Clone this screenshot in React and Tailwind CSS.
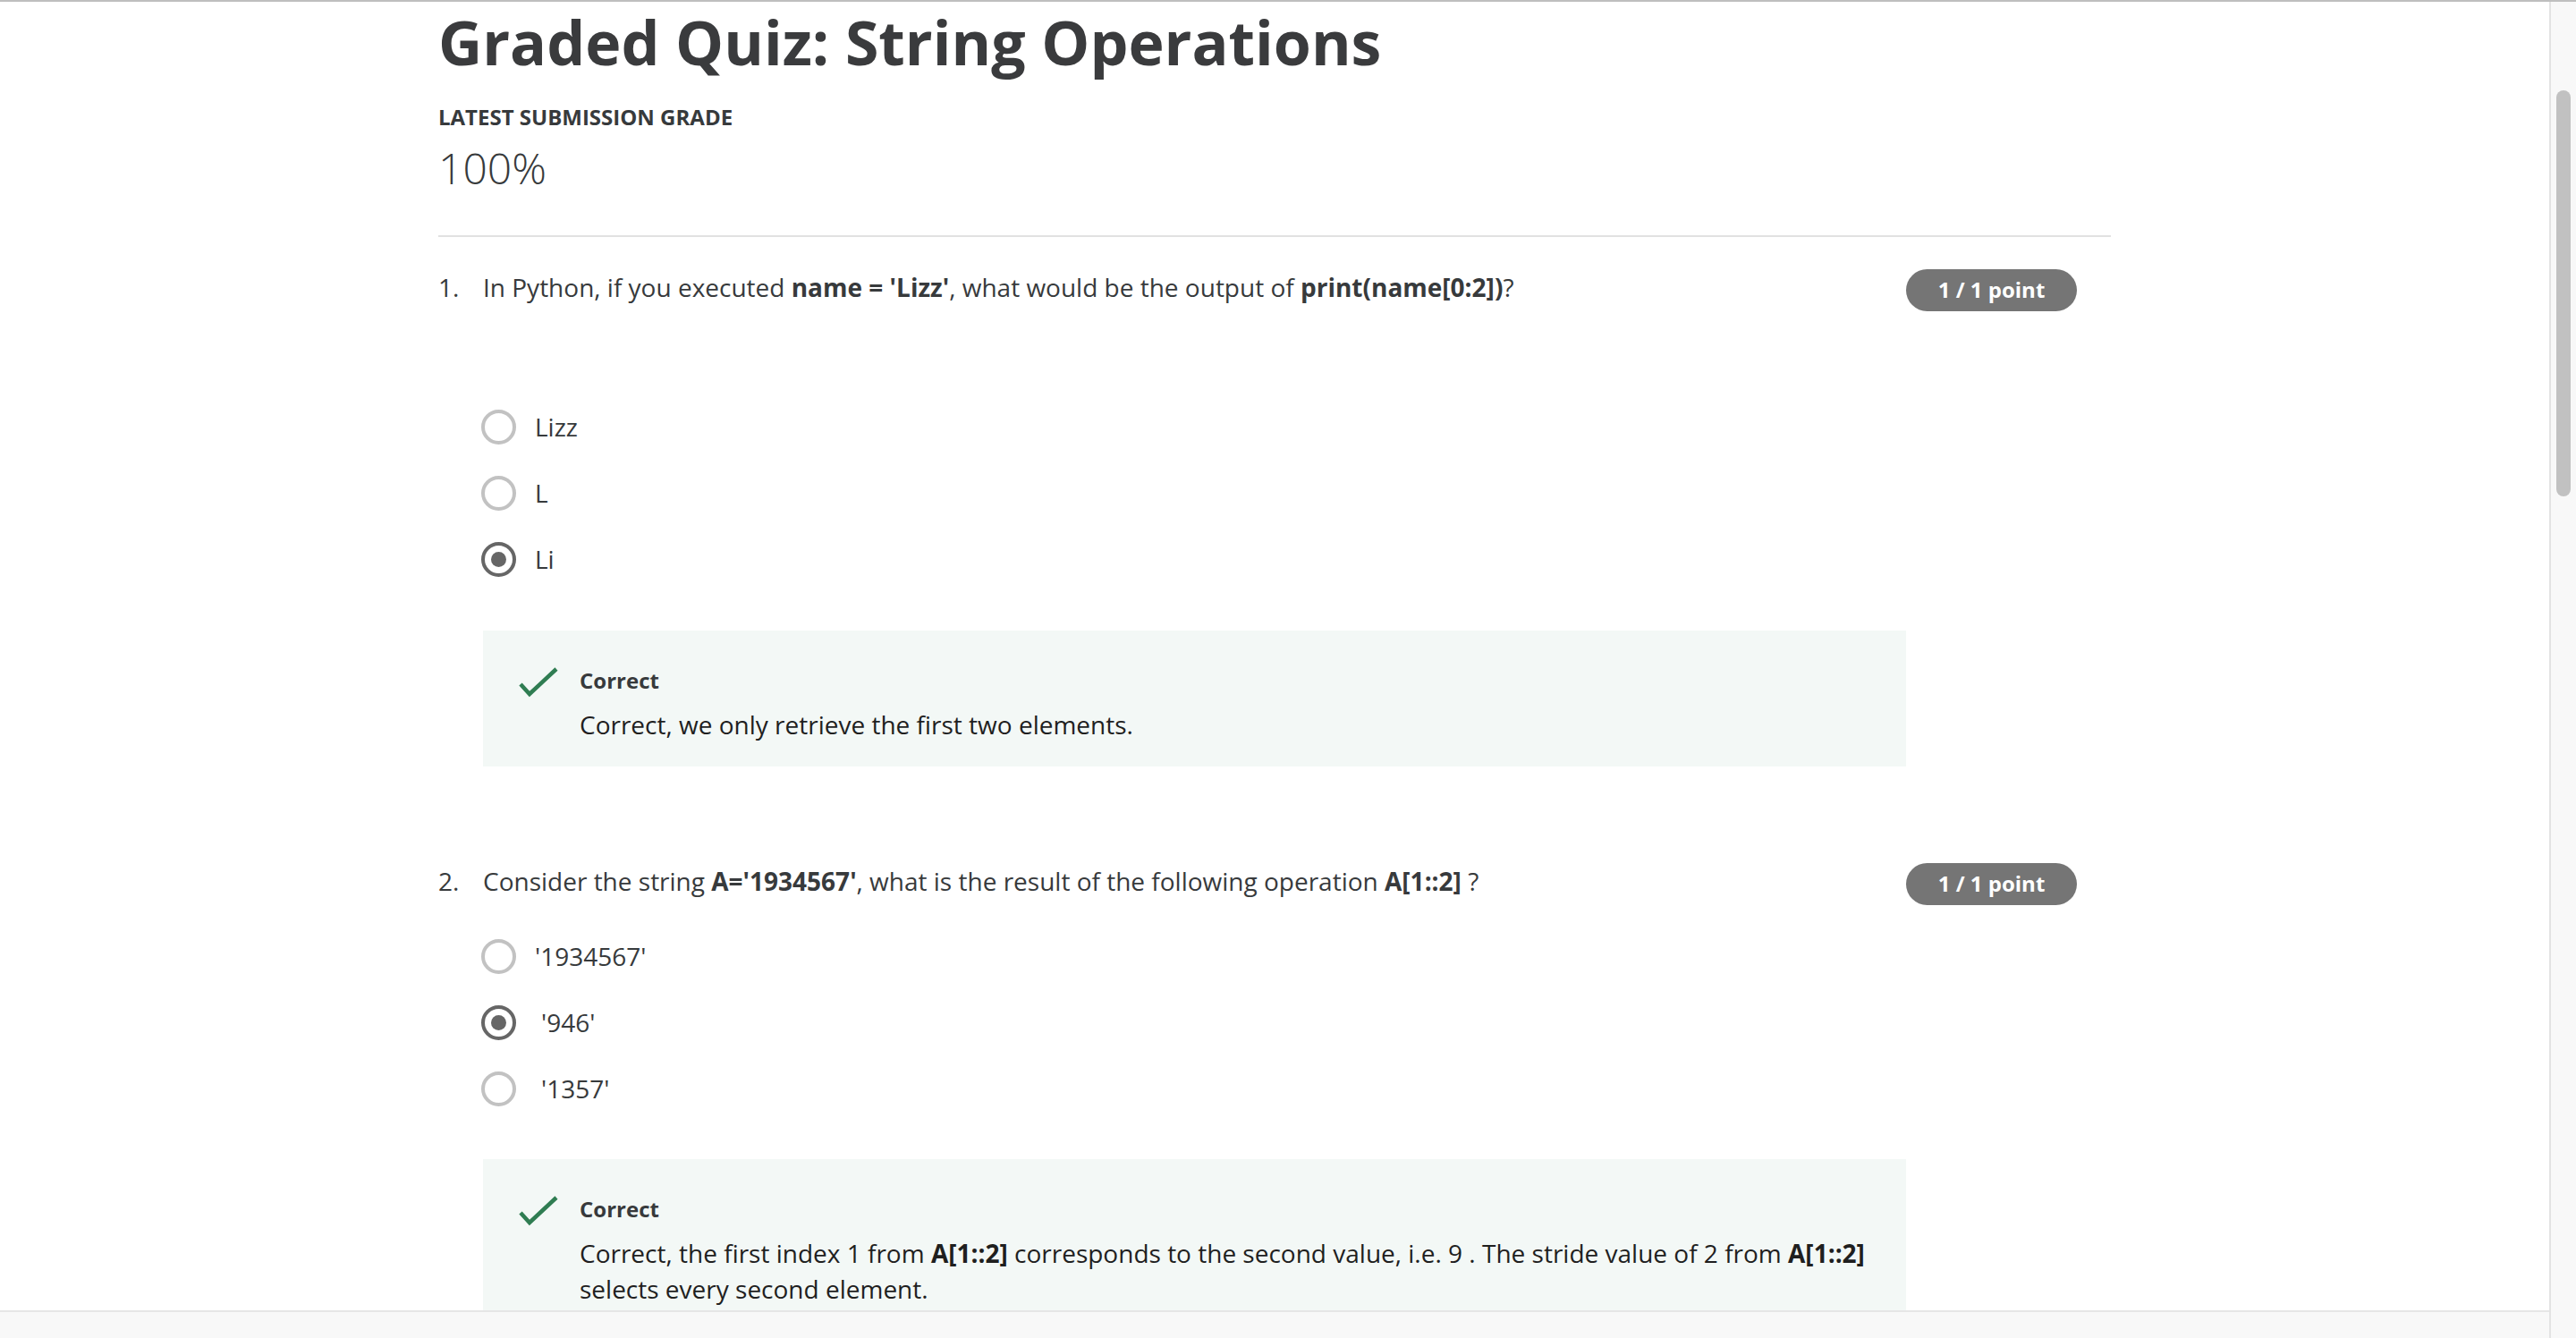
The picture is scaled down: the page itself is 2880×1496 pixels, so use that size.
import React from 'react';

const questions = [
  {
    id: 1,
    text: (
      <>
        In Python, if you executed <strong className="font-bold">name = 'Lizz'</strong>, what would be the output of{' '}
        <strong className="font-bold">print(name[0:2])</strong>?
      </>
    ),
    gap: 'mt-[92px]',
    options: [
      { label: 'Lizz', selected: false },
      { label: 'L', selected: false },
      { label: 'Li', selected: true },
    ],
    feedback: <>Correct, we only retrieve the first two elements.</>,
  },
  {
    id: 2,
    text: (
      <>
        Consider the string <strong className="font-bold">A='1934567'</strong>, what is the result of the following operation{' '}
        <strong className="font-bold">A[1::2]</strong> ?
      </>
    ),
    gap: 'mt-[20px]',
    options: [
      { label: "'1934567'", selected: false },
      { label: "'946'", selected: true, space: true },
      { label: "'1357'", selected: false, space: true },
    ],
    feedback: (
      <>
        Correct, the first index 1 from <strong className="font-bold">A[1::2]</strong> corresponds to the second value, i.e. 9 . The
        stride value of 2 from <strong className="font-bold">A[1::2]</strong> selects every second element.
      </>
    ),
  },
];

function Radio({ selected }) {
  if (selected) {
    return (
      <span className="flex h-[39px] w-[39px] shrink-0 items-center justify-center rounded-full border-[4px] border-[#666666]">
        <span className="h-[17px] w-[17px] rounded-full bg-[#666666]" />
      </span>
    );
  }
  return <span className="h-[39px] w-[39px] shrink-0 rounded-full border-[4px] border-[#c2c2c2]" />;
}

function CheckIcon() {
  return (
    <svg width="44" height="34" viewBox="0 0 44 34" className="shrink-0">
      <path d="M2 19 L12 30 L42 2" fill="none" stroke="#2f7d52" strokeWidth="4.5" />
    </svg>
  );
}

function Question({ q, boxGap }) {
  return (
    <div>
      <div className="flex items-start">
        <span className="w-[50px] shrink-0 text-[28px] leading-[40px]">{q.id}.</span>
        <p className="flex-1 text-[28px] leading-[40px]">{q.text}</p>
        <span className="mr-[38px] flex h-[47px] w-[191px] shrink-0 items-center justify-center rounded-full bg-[#757575] pb-[2px] text-[24px] font-bold text-white">
          1 / 1 point
        </span>
      </div>

      <ul className={`${q.gap} pl-[48px]`}>
        {q.options.map((o) => (
          <li key={o.label} className="flex h-[74px] items-center gap-[21px]">
            <Radio selected={o.selected} />
            <span className={`text-[28px] leading-[40px] ${o.space ? 'ml-[7px]' : ''}`}>{o.label}</span>
          </li>
        ))}
      </ul>

      <div className={`ml-[50px] ${boxGap} flex w-[1591px] bg-[#f3f8f6] pb-[27px] pl-[40px] pr-[44px] pt-[40px]`}>
        <div className="mt-[1px] w-[68px] shrink-0">
          <CheckIcon />
        </div>
        <div className="flex-1">
          <p className="text-[24px] font-bold leading-[32px]">Correct</p>
          <p className="mt-[13px] text-[28px] leading-[40px] text-[#1f1f1f]">{q.feedback}</p>
        </div>
      </div>
    </div>
  );
}

export default function App() {
  return (
    <div className="flex h-[1496px] w-full flex-col overflow-hidden bg-white text-[#373a3c]" style={{ fontFamily: '"Open Sans", "Liberation Sans", sans-serif' }}>
      <div className="h-[2px] w-full shrink-0 bg-[#bfbfbf]" />
      <div className="flex min-h-0 flex-1">
        <div className="flex min-w-0 flex-1 flex-col">
          <main className="min-h-0 flex-1 overflow-hidden">
            <div className="ml-[490px] w-[1870px]">
              <h1 className="mt-[3px] text-[68px] font-bold leading-[84px] text-[#3a3b3d]">Graded Quiz: String Operations</h1>
              <p className="mt-[26px] text-[24px] font-bold uppercase leading-[32px]">Latest Submission Grade</p>
              <p className="mt-[11px] text-[48px] font-light leading-[60px]">100%</p>
              <hr className="mt-[45px] border-0 border-t-2 border-[#e1e1e1]" />

              <div className="mt-[36px] flex flex-col gap-[108px]">
                {questions.map((q, i) => (
                  <Question key={q.id} q={q} boxGap={i === 0 ? 'mt-[43px]' : 'mt-[42px]'} />
                ))}
              </div>
            </div>
          </main>
          <div className="h-[31px] shrink-0 border-t-2 border-[#e6e6e6] bg-[#f8f8f8]" />
        </div>
        <div className="w-[30px] shrink-0 border-l-2 border-[#e3e3e3] bg-[#f8f8f8] pl-[6px] pt-[99px]">
          <div className="h-[454px] w-[16px] rounded-full bg-[#c1c1c1]" />
        </div>
      </div>
    </div>
  );
}
